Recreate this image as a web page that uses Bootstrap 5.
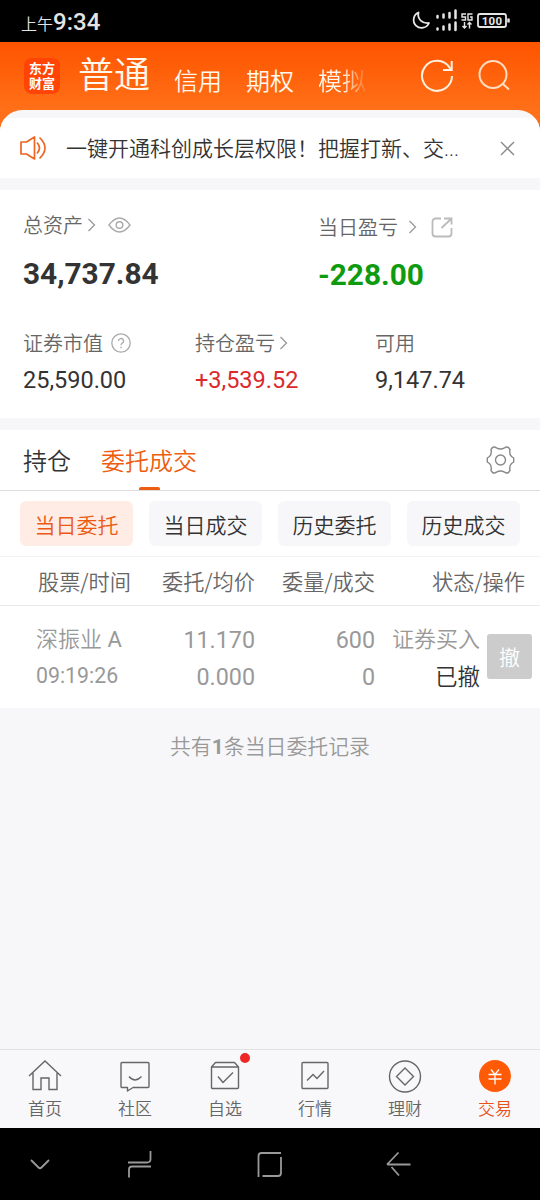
<!DOCTYPE html>
<html lang="zh-CN">
<head>
<meta charset="utf-8">
<meta name="viewport" content="width=device-width, initial-scale=1">
<title>东方财富 交易</title>
<link href="https://cdn.jsdelivr.net/npm/bootstrap@5.3.0/dist/css/bootstrap.min.css" rel="stylesheet">
<style>
  body { font-family: Roboto, "Noto Sans CJK SC", sans-serif; font-weight: 350; color: #333; background: #f7f7fa; line-height: 1; }
  svg { display: block; flex: none; fill: none; }
  .screen { width: 540px; height: 1200px; overflow: hidden; white-space: nowrap; }
  .lbl, .mode, .notice, .tabs, .chip, .cols-head, .cancel { font-family: "Noto Sans CJK SC", Roboto, sans-serif; }
  .num { font-weight: 400; }
  .statusbar { height: 42px; background: #000; color: #e4e4e4; padding: 0 30px 0 21px; }
  .statusbar .ampm { font-size: 16px; }
  .statusbar .clock { font-size: 24px; font-weight: 500; }
  .top-area { background: linear-gradient(#ff5400 0, #ff7018 68px, #ff7018 100%); }
  .brand-head { height: 68px; padding: 0 30px 0 24px; color: #fff8ec; }
  .logo { width: 36px; height: 36px; margin-top: 16px; border-radius: 8px; background: #ff4406; color: #fff; font-size: 13px; font-weight: 700; line-height: 15px; }
  .mode-main { font-size: 36px; line-height: 40px; margin: 14px 0 0 18px; }
  .mode { font-size: 24px; line-height: 30px; margin-top: 23px; }
  .mode.fade-end { background: linear-gradient(90deg, #fff8ec 50%, rgba(255,248,236,.1) 100%); -webkit-background-clip: text; background-clip: text; color: transparent; }
  .sheet { background: #f7f7fa; border-radius: 22px 22px 0 0; padding-top: 8px; overflow: hidden; }
  .notice { height: 60px; background: #fff; padding: 0 25px 0 20px; font-size: 21px; }
  .notice .dots { font-family: Roboto; }
  .assets { height: 228px; margin-top: 12px; background: #fff; padding-left: 23px; }
  .lbl { font-size: 20px; line-height: 24px; color: #666; }
  .big { font-size: 29.800px; line-height: 36px; font-weight: 700; }
  .val { font-size: 23.500px; line-height: 28px; font-weight: 400; }
  .down { color: #0f9b0f; } .up { color: #dc2a2c; }
  .tabs { height: 61px; margin-top: 12px; background: #fff; border-bottom: 1px solid #ddd; padding: 0 25px 0 23px; font-size: 24px; }
  .tab-on { color: #ee5c10; }
  .tab-on::after { content: ""; position: absolute; left: 38px; bottom: 0; width: 21px; height: 3px; border-radius: 2px 2px 0 0; background: #ee5c10; }
  .chips { height: 65px; padding: 10px 20px 0; gap: 16px; background: #fff; }
  .chip { width: 113px; height: 45px; border-radius: 6px; background: #f7f7fa; font-size: 21px; padding-top: 1px; }
  .chip.on { background: #ffece4; color: #ea5a14; }
  .cols { display: grid; grid-template-columns: 131px 124px 120px 1fr; }
  .cols-head { height: 50px; border-top: 1px solid #f3f3f5; border-bottom: 1px solid #eaeaea; background: #fff; color: #666; font-size: 21.200px; padding-right: 15px; }
  .cols-row { height: 102px; background: #fff; color: #999; font-size: 23.300px; padding: 15px 8px 0 0; }
  .cols-row .ln { height: 37px; line-height: 38px; }
  .t22 { font-size: 22px; }
  .t21 { font-size: 21.300px; }
  .cancel { width: 45px; height: 45px; margin: 13px 0 0 7px; border-radius: 3px; background: #ccc; color: #fff; font-size: 21px; }
  .summary { height: 341px; padding-top: 27px; font-size: 20.900px; line-height: 24px; color: #999; }
  .tabbar { height: 79px; border-top: 1px solid #e2e2e5; font-size: 17px; color: #666; background: #f8f8fb; }
  .tabbar .cell { width: 90px; padding-top: 8px; }
  .tabbar .cell svg { margin-right: 1px; }
  .tabbar .cell span { line-height: 20px; margin-top: 7px; }
  .dot { position: absolute; left: 60px; top: 3px; width: 10px; height: 10px; border-radius: 50%; background: #ee2626; }
  .sysnav { height: 72px; background: #000; }
</style>
</head>
<body>
<main class="screen">
  <div class="statusbar d-flex align-items-center justify-content-between">
    <div class="d-flex align-items-baseline" style="padding-top:1px"><span class="ampm">上午</span><span class="clock">9:34</span></div>
    <svg width="99" height="24" viewBox="411 9 99 24" stroke="#e6e6e6">
      <path d="M418.500 12.500a8 8 0 1 0 10.500 10.500c-6.500 1-12-4-10.500-10.500z" stroke-width="1.800" stroke-linejoin="round"/>
      <path d="M437.500 16v1.500M443.500 14.500v3M449.500 13v4.500M455.500 10.500v7.500M437.500 28.500v1M443.500 26.500v3M449.500 24.500v5M455.500 22.500v7.500" stroke-width="2.500" stroke-linecap="round"/>
      <path d="M466 14h-4v3h3.500v3H461.500M472.500 14h-4.500v6h4v-3h-2M464.500 22v6m-2-2 2 2 2-2M469.500 28.500v-6m-2 2 2-2 2 2" stroke-width="1.400"/>
      <rect x="478" y="14" width="28" height="13" rx="2" stroke-width="1.800"/>
      <path d="M508.500 18.500v4" stroke-width="2.500"/>
      <text x="492" y="25" text-anchor="middle" font-family="Roboto" font-weight="700" font-size="11.500" letter-spacing=".2" fill="#e6e6e6" stroke="none">100</text>
    </svg>
  </div>

  <div class="top-area">
    <header class="brand-head d-flex">
      <div class="logo d-flex flex-column align-items-center justify-content-center"><span>东方</span><span>财富</span></div>
      <div class="mode-main">普通</div>
      <div class="mode" style="margin-left:24px">信用</div>
      <div class="mode" style="margin-left:24px">期权</div>
      <div class="mode fade-end" style="margin-left:24px">模拟</div>
      <svg class="ms-auto" style="margin-top:16px" width="90" height="36" viewBox="420 58 90 36" stroke="#fff1e0" stroke-width="2">
        <path d="M452 76A15 15 0 1 1 449.500 67.500L451 69.500M451.700 61v9H443"/>
        <circle cx="493" cy="74.500" r="13.500" stroke="#ffdcc0"/><path d="m503 84 6 5.500" stroke="#ffdcc0"/>
      </svg>
    </header>
    <div class="sheet">
      <div class="notice d-flex align-items-center">
        <svg width="28" height="26" viewBox="20 135 28 26" stroke="#ee6420" stroke-width="1.700" stroke-linejoin="round">
          <path d="M21 142h5.500l8-5v22l-8-5H21zM37 142.500q5 5.500 0 11M39.500 137.500q11 10.500 0 21"/>
        </svg>
        <span style="margin-left:18px;padding-top:1px">一键开通科创成长层权限！把握打新、交<span class="dots">...</span></span>
        <svg class="ms-auto" width="15" height="15" viewBox="0 0 15 15" stroke="#888" stroke-width="1.400"><path d="m1 1 13 13M14 1 1 14"/></svg>
      </div>
    </div>
  </div>

  <section class="assets">
    <div class="d-flex" style="padding-top:23px">
      <div style="width:295px">
        <div class="lbl d-flex align-items-center">总资产
          <svg width="10" height="14" style="margin-left:4px" viewBox="0 0 10 14" stroke="#999" stroke-width="1.300"><path d="m1.500 1 6 6-6 6"/></svg>
          <svg width="23" height="16" style="margin-left:11px" viewBox="0 0 23 16" stroke="#aaa" stroke-width="1.400"><path d="M1 8q10.500-14 21 0-10.500 14-21 0z"/><circle cx="11.500" cy="8" r="3.300"/></svg>
        </div>
        <div class="big" style="margin-top:19px">34,737.84</div>
      </div>
      <div>
        <div class="lbl d-flex align-items-center" style="padding-top:2px">当日盈亏
          <svg width="10" height="14" style="margin-left:10px" viewBox="0 0 10 14" stroke="#999" stroke-width="1.300"><path d="m1.500 1 6 6-6 6"/></svg>
          <svg width="22" height="21" style="margin-left:13px" viewBox="0 0 22 21" stroke="#bbb" stroke-width="1.800"><path d="M10 1.500H4.500a3 3 0 0 0-3 3v12a3 3 0 0 0 3 3h13a3 3 0 0 0 3-3V11M13 1.500h7.500v6M20.500 1.500 10.500 11"/></svg>
        </div>
        <div class="big down" style="margin-top:18px">-228.00</div>
      </div>
    </div>
    <div class="d-flex" style="padding-top:38px">
      <div style="width:172px">
        <div class="lbl d-flex align-items-center">证券市值
          <svg width="20" height="20" style="margin-left:8px" viewBox="0 0 20 20" stroke="#aaa" stroke-width="1.300"><circle cx="10" cy="10" r="9.200"/><path d="M7.500 8a2.500 2.500 0 1 1 3.700 2.200q-1.200.7-1.200 2M10 13.800v1.500"/></svg>
        </div>
        <div class="val" style="margin-top:11px">25,590.00</div>
      </div>
      <div style="width:180px">
        <div class="lbl d-flex align-items-center">持仓盈亏
          <svg width="10" height="14" style="margin-left:4px" viewBox="0 0 10 14" stroke="#999" stroke-width="1.300"><path d="m1.500 1 6 6-6 6"/></svg>
        </div>
        <div class="val up" style="margin-top:11px">+3,539.52</div>
      </div>
      <div><div class="lbl">可用</div><div class="val" style="margin-top:11px">9,147.74</div></div>
    </div>
  </section>

  <nav class="tabs d-flex align-items-center">
    <span>持仓</span>
    <span class="tab-on position-relative h-100 d-flex align-items-center" style="margin-left:30px">委托成交</span>
    <svg class="ms-auto" width="29" height="28" viewBox="-14.500 -14 29 28" stroke="#888" stroke-width="1.400" stroke-linejoin="round">
      <path d="M-8-12.500Q-6-13.500-4-12.200Q0-9.800 4-12.200Q6-13.500 8-12.500L9.500-10.500Q8.500-6 11-3.500L13.200-2V2L11 3.500Q8.500 6 9.500 10.500L8 12.500Q6 13.500 4 12.200Q0 9.800-4 12.200Q-6 13.500-8 12.500L-9.500 10.500Q-8.500 6-11 3.500L-13.200 2V-2L-11-3.500Q-8.500-6-9.500-10.500Z"/>
      <circle r="5"/>
    </svg>
  </nav>

  <div class="chips d-flex">
    <div class="chip on d-flex align-items-center justify-content-center">当日委托</div>
    <div class="chip d-flex align-items-center justify-content-center">当日成交</div>
    <div class="chip d-flex align-items-center justify-content-center">历史委托</div>
    <div class="chip d-flex align-items-center justify-content-center">历史成交</div>
  </div>

  <div class="cols cols-head align-items-center text-end">
    <span>股票/时间</span><span>委托/均价</span><span>委量/成交</span><span>状态/操作</span>
  </div>
  <div class="cols cols-row text-end">
    <div class="text-start" style="padding-left:36px"><div class="ln t22">深振业 <span class="num">A</span></div><div class="ln num t21" style="margin-top:-1px">09:19:26</div></div>
    <div class="num"><div class="ln">11.170</div><div class="ln">0.000</div></div>
    <div class="num"><div class="ln">600</div><div class="ln">0</div></div>
    <div class="d-flex justify-content-end">
      <div class="t22"><div class="ln">证券买入</div><div class="ln" style="color:#333;font-size:22.5px">已撤</div></div>
      <div class="cancel d-flex align-items-center justify-content-center">撤</div>
    </div>
  </div>

  <div class="summary text-center">共有<b>1</b>条当日委托记录</div>

  <nav class="tabbar d-flex">
    <div class="cell d-flex flex-column align-items-center">
      <svg width="34" height="34" viewBox="0 0 34 34" stroke="#666" stroke-width="1.400"><path d="M1 18 17 3l16 15M5 15v16.500h8V20h8v11.500h8V15"/></svg><span>首页</span>
    </div>
    <div class="cell d-flex flex-column align-items-center">
      <svg width="34" height="34" viewBox="0 0 34 34" stroke="#666" stroke-width="1.400" stroke-linejoin="round"><path d="M4 4.500h26a1 1 0 0 1 1 1v23a1 1 0 0 1-1 1H15l-5.500 3.500V29.500H4a1 1 0 0 1-1-1v-23a1 1 0 0 1 1-1zM11 18.500q6 7 12.500 0"/></svg><span>社区</span>
    </div>
    <div class="cell d-flex flex-column align-items-center position-relative">
      <i class="dot"></i>
      <svg width="34" height="34" viewBox="0 0 34 34" stroke="#666" stroke-width="1.400" stroke-linejoin="round"><path d="M3.500 9 7.500 4.500h19l4 4.500V29.500a1 1 0 0 1-1 1h-25a1 1 0 0 1-1-1zM3.500 9h27M10 18.500l5 6 10-10"/></svg><span>自选</span>
    </div>
    <div class="cell d-flex flex-column align-items-center">
      <svg width="34" height="34" viewBox="0 0 34 34" stroke="#666" stroke-width="1.400"><rect x="4" y="4.500" width="26" height="26" rx="1"/><path d="m9 22.500 6-6 4 4 7-7.500"/></svg><span>行情</span>
    </div>
    <div class="cell d-flex flex-column align-items-center">
      <svg width="34" height="35" style="margin-bottom:-1px" viewBox="0 0 34 35" stroke="#666" stroke-width="1.400"><circle cx="17" cy="18.500" r="15.500"/><path d="m17 10 8.500 8.500-8.500 8.500-8.500-8.500z"/></svg><span>理财</span>
    </div>
    <div class="cell d-flex flex-column align-items-center" style="color:#e8541a">
      <svg width="34" height="34" viewBox="0 0 34 34" stroke="#fff" stroke-width="1.300"><circle cx="17" cy="18" r="16" fill="#ff5a05" stroke="none"/><path d="m13 11.500 4 5 4-5M10.500 16.500h13M10.500 21h13M17 16.500V26.500"/></svg><span>交易</span>
    </div>
  </nav>

  <div class="sysnav">
    <svg width="540" height="72" viewBox="0 1128 540 72" stroke="#999" stroke-width="1.800" stroke-linejoin="round">
      <path d="m31 1160 7.500 7.500q1.500 1.500 3 0l7.500-7.500"/>
      <path d="M128 1162.500h19q3.500 0 3.500-3.500v-8M151 1166.500h-19q-3 0-3 3v8"/>
      <path d="M258.500 1177v-21q0-3 3-3H281M281 1157v16q0 3-3 3h-15.500"/>
      <path d="M398.500 1152.500 388 1163.500q-1 1 0 1H410.500M391.500 1167l7.500 8.500"/>
    </svg>
  </div>
</main>
<script src="https://cdn.jsdelivr.net/npm/bootstrap@5.3.0/dist/js/bootstrap.bundle.min.js"></script>
</body>
</html>
